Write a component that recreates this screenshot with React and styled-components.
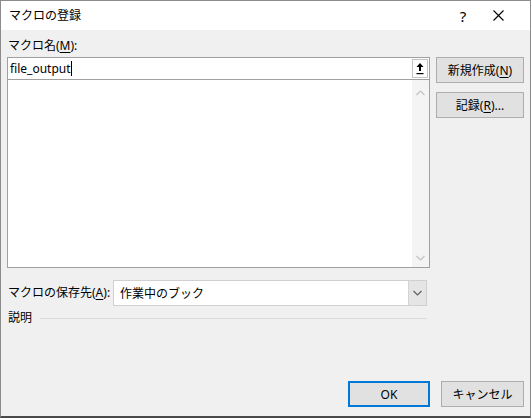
import React from 'react';
import styled, { createGlobalStyle } from 'styled-components';

const GlobalStyle = createGlobalStyle`
  html, body {
    margin: 0;
    padding: 0;
    background: #f0f0f0;
  }
  * {
    box-sizing: border-box;
  }
`;

const uiFont = `"Noto Sans", "Noto Sans CJK JP", sans-serif`;

const Window = styled.div`
  width: 531px;
  height: 418px;
  display: flex;
  flex-direction: column;
  background: #f0f0f0;
  border: 1px solid #8c8c8c;
  border-bottom: 2px solid #4a4a4a;
  font-family: ${uiFont};
  font-size: 12px;
  color: #000;
`;

const TitleBar = styled.div`
  height: 29px;
  flex: none;
  display: flex;
  align-items: center;
  justify-content: space-between;
  background: #fff;
  padding-left: 8px;
`;

const Title = styled.div`
  font-size: 12px;
  line-height: 16px;
`;

const TitleButtons = styled.div`
  display: flex;
  height: 100%;
  gap: 10px;
  padding-right: 17px;
`;

const TitleButton = styled.div`
  width: ${(p) => p.$w || 30}px;
  height: 100%;
  display: flex;
  align-items: center;
  justify-content: center;
  font-size: 15px;
`;

// 本体（左の入力欄と右のボタン列）
const Body = styled.div`
  flex: 1;
  display: flex;
  flex-direction: column;
  padding: 7px 6px 8px 6px;
`;

const Top = styled.div`
  display: flex;
  gap: 6px;
`;

const MainColumn = styled.div`
  width: 424px;
  display: flex;
  flex-direction: column;
`;

const Label = styled.div`
  padding-left: 1px;
  line-height: 18px;
  white-space: nowrap;
  margin-bottom: ${(p) => p.$mb || 0}px;
`;

const Key = styled.span`
  text-decoration: underline;
  text-underline-offset: 2px;
`;

const NameInput = styled.div`
  height: 23px;
  display: flex;
  align-items: center;
  justify-content: space-between;
  background: #fff;
  border: 1px solid #a0a0a0;
  padding: 0 1px 0 2px;
  font-size: 12px;
`;

const Caret = styled.span`
  display: inline-block;
  width: 1px;
  height: 15px;
  background: #000;
  vertical-align: -3px;
`;

const CollapseButton = styled.div`
  width: 16px;
  height: 19px;
  display: flex;
  align-items: center;
  justify-content: center;
  background: #fff;
  border: 1px solid #c4c4c4;
`;

const ListBox = styled.div`
  height: 189px;
  margin-top: -1px;
  display: flex;
  justify-content: flex-end;
  background: #fff;
  border: 1px solid #a0a0a0;
`;

const ScrollBar = styled.div`
  width: 17px;
  display: flex;
  flex-direction: column;
  justify-content: space-between;
  align-items: center;
  background: #f4f4f4;
  padding: 10px 0 6px;
`;

const SideColumn = styled.div`
  width: 88px;
  padding-top: 20px;
  display: flex;
  flex-direction: column;
  gap: 9px;
`;

const Button = styled.div`
  width: ${(p) => p.$w || 88}px;
  height: 26px;
  display: flex;
  align-items: center;
  justify-content: center;
  background: #e1e1e1;
  border: 1px solid ${(p) => (p.$default ? '#0078d7' : '#adadad')};
  box-shadow: ${(p) => (p.$default ? 'inset 0 0 0 1px #0078d7' : 'none')};
  font-size: 12px;
  color: #000;
`;

const SaveRow = styled.div`
  margin-top: 12px;
  width: 420px;
  display: flex;
  align-items: center;
  justify-content: space-between;
`;

const Combo = styled.div`
  width: 314px;
  height: 26px;
  display: flex;
  align-items: stretch;
  justify-content: space-between;
  background: #fff;
  border: 1px solid #d0d0d0;
  padding-left: 6px;
`;

const ComboText = styled.div`
  display: flex;
  align-items: center;
  font-size: 12px;
`;

const ComboArrow = styled.div`
  width: 18px;
  display: flex;
  align-items: center;
  justify-content: center;
  background: #e5e5e5;
  border-left: 1px solid #d4d4d4;
`;

const DescRow = styled.div`
  margin-top: 3px;
  width: 420px;
  display: flex;
  align-items: center;
  gap: 8px;
`;

const Rule = styled.div`
  flex: 1;
  height: 1px;
  background: #dcdcdc;
`;

const Footer = styled.div`
  margin-top: auto;
  display: flex;
  justify-content: flex-end;
  gap: 11px;
  margin-bottom: 1px;
`;

const Chevron = ({ up, color = '#c2c2c2' }) => (
  <svg width="9" height="6" viewBox="0 0 9 6">
    <path
      d={up ? 'M0.5 5 L4.5 1 L8.5 5' : 'M0.5 1 L4.5 5 L8.5 1'}
      fill="none"
      stroke={color}
      strokeWidth="1.2"
    />
  </svg>
);

const CollapseIcon = () => (
  <svg width="8" height="13" viewBox="0 0 8 13">
    <path d="M4 1 L7.5 5 L5 5 L5 9 L3 9 L3 5 L0.5 5 Z" fill="#000" />
    <rect x="0.5" y="11" width="7" height="1.2" fill="#000" />
  </svg>
);

const CloseIcon = () => (
  <svg width="11" height="11" viewBox="0 0 11 11">
    <path d="M0.5 0.5 L10.5 10.5 M10.5 0.5 L0.5 10.5" stroke="#000" strokeWidth="1.1" />
  </svg>
);

const App = () => {
  return (
    <>
      <GlobalStyle />
      <Window>
        <TitleBar>
          <Title>マクロの登録</Title>
          <TitleButtons>
            <TitleButton $w={20}>?</TitleButton>
            <TitleButton>
              <CloseIcon />
            </TitleButton>
          </TitleButtons>
        </TitleBar>
        <Body>
          <Top>
            <MainColumn>
              <Label $mb={2}>
                マクロ名(<Key>M</Key>):
              </Label>
              <NameInput>
                <span>
                  file_output
                  <Caret />
                </span>
                <CollapseButton>
                  <CollapseIcon />
                </CollapseButton>
              </NameInput>
              <ListBox>
                <ScrollBar>
                  <Chevron up />
                  <Chevron />
                </ScrollBar>
              </ListBox>
            </MainColumn>
            <SideColumn>
              <Button>
                新規作成(<Key>N</Key>)
              </Button>
              <Button>
                記録(<Key>R</Key>)...
              </Button>
            </SideColumn>
          </Top>
          <SaveRow>
            <Label>
              マクロの保存先(<Key>A</Key>):
            </Label>
            <Combo>
              <ComboText>作業中のブック</ComboText>
              <ComboArrow>
                <Chevron color="#606060" />
              </ComboArrow>
            </Combo>
          </SaveRow>
          <DescRow>
            <Label>説明</Label>
            <Rule />
          </DescRow>
          <Footer>
            <Button $w={82} $default>
              OK
            </Button>
            <Button $w={83}>キャンセル</Button>
          </Footer>
        </Body>
      </Window>
    </>
  );
};

export default App;
